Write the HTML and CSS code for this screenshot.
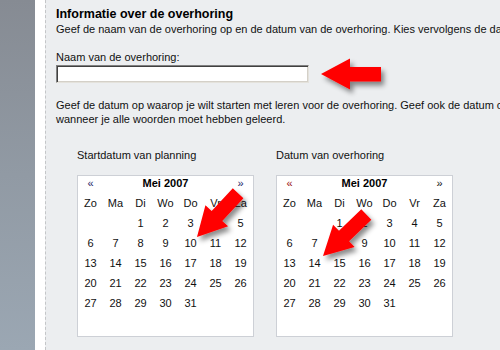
FILE: index.html
```html
<!DOCTYPE html>
<html lang="nl">
<head>
<meta charset="utf-8">
<title>Overhoring</title>
<link rel="stylesheet" href="styles.css">
</head>
<body>
<div class="page">
  <div class="sidebar"></div>
  <div class="gutter"></div>
  <main class="content">
    <h1 class="title">Informatie over de overhoring</h1>
    <p class="intro">Geef de naam van de overhoring op en de datum van de overhoring. Kies vervolgens de datum waarop je wilt beginnen.</p>
    <label class="label" for="naam">Naam van de overhoring:</label>
    <input id="naam" class="name-input" type="text">
    <p class="explain">Geef de datum op waarop je wilt starten met leren voor de overhoring. Geef ook de datum op<br>wanneer je alle woorden moet hebben geleerd.</p>
    <div class="calendars">
      <section class="cal-block">
        <div class="cal-label">Startdatum van planning</div>
        <div class="calendar">
          <div class="cal-head"><span class="nav nav-blue">&laquo;</span><span class="month">Mei 2007</span><span class="nav nav-blue">&raquo;</span></div>
          <div class="cal-grid">
            <span>Zo</span><span>Ma</span><span>Di</span><span>Wo</span><span>Do</span><span>Vr</span><span>Za</span>
            <span></span><span></span><span>1</span><span>2</span><span>3</span><span>4</span><span>5</span>
            <span>6</span><span>7</span><span>8</span><span>9</span><span>10</span><span>11</span><span>12</span>
            <span>13</span><span>14</span><span>15</span><span>16</span><span>17</span><span>18</span><span>19</span>
            <span>20</span><span>21</span><span>22</span><span>23</span><span>24</span><span>25</span><span>26</span>
            <span>27</span><span>28</span><span>29</span><span>30</span><span>31</span>
          </div>
        </div>
      </section>
      <section class="cal-block">
        <div class="cal-label">Datum van overhoring</div>
        <div class="calendar">
          <div class="cal-head"><span class="nav nav-red">&laquo;</span><span class="month">Mei 2007</span><span class="nav">&raquo;</span></div>
          <div class="cal-grid">
            <span>Zo</span><span>Ma</span><span>Di</span><span>Wo</span><span>Do</span><span>Vr</span><span>Za</span>
            <span></span><span></span><span>1</span><span>2</span><span>3</span><span>4</span><span>5</span>
            <span>6</span><span>7</span><span>8</span><span>9</span><span>10</span><span>11</span><span>12</span>
            <span>13</span><span>14</span><span>15</span><span>16</span><span>17</span><span>18</span><span>19</span>
            <span>20</span><span>21</span><span>22</span><span>23</span><span>24</span><span>25</span><span>26</span>
            <span>27</span><span>28</span><span>29</span><span>30</span><span>31</span>
          </div>
        </div>
      </section>
    </div>
  </main>
</div>
<svg class="arrows" width="500" height="350" viewBox="0 0 500 350" aria-hidden="true">
  <defs>
    <filter id="shadow" x="-30%" y="-30%" width="160%" height="160%">
      <feDropShadow dx="3" dy="4" stdDeviation="2.5" flood-color="#000" flood-opacity="0.45"/>
    </filter>
    <polygon id="arrow" points="0,0 29,-15.5 29,-7 60,-7 60,7.5 29,7.5 29,15.5"/>
  </defs>
  <g filter="url(#shadow)" fill="#ff0000">
    <use href="#arrow" transform="translate(321,74)"/>
    <use href="#arrow" transform="translate(197,237) rotate(-47)"/>
    <use href="#arrow" transform="translate(323,256) rotate(-44)"/>
  </g>
</svg>
</body>
</html>
```

FILE: styles.css
```css
html, body {
  margin: 0;
  padding: 0;
  height: 100%;
  overflow: hidden;
}

body {
  font-family: "Liberation Sans", Arial, sans-serif;
  font-size: 11px;
  color: #111;
  position: relative;
}

.page {
  display: flex;
  min-height: 100vh;
}

.sidebar {
  width: 35px;
  flex: none;
  background: linear-gradient(to bottom, #868b93 0%, #919aa4 50%, #9ba7b3 100%);
}

.gutter {
  width: 10px;
  flex: none;
  background: #ffffff;
}

.content {
  flex: 1;
  min-width: 0;
  overflow: hidden;
  background: #eceef0;
  border-left: 1px dashed #c4c6c8;
  padding: 6px 0 0 10px;
}

.title {
  margin: 0;
  font-size: 12.5px;
  line-height: 16px;
  font-weight: bold;
  color: #000;
  white-space: nowrap;
}

.intro {
  margin: 0;
  line-height: 14px;
  white-space: nowrap;
}

.label {
  display: block;
  margin-top: 14px;
  line-height: 14px;
}

.name-input {
  display: block;
  box-sizing: border-box;
  width: 253px;
  height: 18px;
  margin: 1px 0 0 0;
  padding: 0;
  background: #fff;
  border: 1px solid;
  border-color: #808080 #e4e2dc #e4e2dc #808080;
  box-shadow: inset 1px 1px 0 #404040, inset -1px -1px 0 #d4d0c8;
  outline: none;
}

.explain {
  margin: 15px 0 0 0;
  line-height: 14px;
  white-space: nowrap;
}

.calendars {
  display: flex;
  gap: 22px;
  margin: 22px 0 0 21px;
}

.cal-label {
  line-height: 14px;
  margin-bottom: 13px;
}

.calendar {
  box-sizing: border-box;
  width: 177px;
  height: 162px;
  background: #fff;
  border: 1px solid #cdd0d6;
}

.cal-head {
  display: grid;
  grid-template-columns: 25px 125px 25px;
  height: 17px;
  line-height: 14px;
  text-align: center;
}

.month {
  font-weight: bold;
  color: #000;
}

.nav {
  color: #111;
}

.nav-blue {
  color: #1c2466;
}

.nav-red {
  color: #9a1010;
}

.cal-grid {
  display: grid;
  grid-template-columns: repeat(7, 25px);
  grid-auto-rows: 20px;
  line-height: 20px;
  text-align: center;
  color: #111;
}

.arrows {
  position: absolute;
  left: 0;
  top: 0;
  pointer-events: none;
}
```
